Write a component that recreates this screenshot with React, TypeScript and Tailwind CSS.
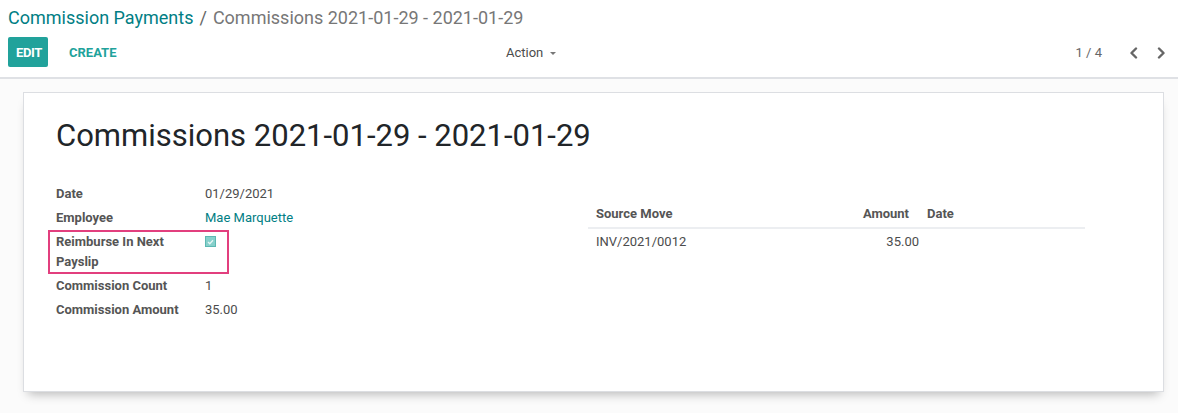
const fields = [
  { label: "Date", value: "01/29/2021" },
  { label: "Employee", value: "Mae Marquette", link: true },
]

const tail = [
  { label: "Commission Count", value: "1" },
  { label: "Commission Amount", value: "35.00" },
]

function Chevron({ dir }: { dir: "left" | "right" }) {
  return (
    <svg width="10" height="12" viewBox="0 0 10 12" className="text-[#666]">
      <path
        d={dir === "left" ? "M7 1.5 L2.5 6 L7 10.5" : "M3 1.5 L7.5 6 L3 10.5"}
        fill="none"
        stroke="currentColor"
        strokeWidth="2.4"
        strokeLinecap="round"
        strokeLinejoin="round"
      />
    </svg>
  )
}

function FieldRow({ label, value, link }: { label: string; value: string; link?: boolean }) {
  return (
    <div className="flex py-[2px] leading-[20px]">
      <div className="w-[149px] font-bold text-[#555]">{label}</div>
      <div className={link ? "text-[#017e84]" : "text-[#4c4c4c]"}>{value}</div>
    </div>
  )
}

export default function App() {
  return (
    <div className="min-h-[413px] bg-[#fbfbfb] font-['Roboto',sans-serif] text-[13px]">
      <div className="border-b-2 border-[#dfe1e5] bg-white px-2 pt-[3px] pb-[10px]">
        <div className="flex h-[28px] items-center text-[18px]">
          <span className="text-[#017e84]">Commission Payments</span>
          <span className="mx-[6px] text-[#666]">/</span>
          <span className="text-[#777]">Commissions 2021-01-29 - 2021-01-29</span>
        </div>
        <div className="mt-[6px] flex h-[30px] items-center">
          <div className="flex w-[497px] items-center">
            <button className="h-[30px] w-[40px] rounded-[2px] bg-[#21a29b] pl-[2px] pt-[2px] font-bold tracking-[-0.3px] text-white">EDIT</button>
            <span className="ml-[21px] pt-[2px] font-bold text-[#21a29b]">CREATE</span>
          </div>
          <div className="flex items-center pt-[2px] text-[#4c4c4c]">
            <span className="ml-[1px]">Action</span>
            <svg width="8" height="5" viewBox="0 0 8 5" className="ml-[6px]">
              <path d="M1 1 L4 4 L7 1 Z" fill="#777" />
            </svg>
          </div>
          <div className="ml-auto flex items-center gap-[17px] pr-[4px] pt-[2px] text-[#666]">
            <span className="mr-[10px]">1 / 4</span>
            <Chevron dir="left" />
            <Chevron dir="right" />
          </div>
        </div>
      </div>

      <div className="ml-[23px] mt-[13px] h-[300px] w-[1141px] border border-[#dcdee2] bg-white pl-[32px] pr-[24px] shadow-[0_7px_10px_-5px_rgba(0,0,0,0.28)]">
        <h1 className="mt-[24px] text-[31px] leading-[38px] text-[#212529]">Commissions 2021-01-29 - 2021-01-29</h1>
        <div className="mt-[27px] flex">
          <div className="w-[532px]">
            {fields.map((f) => (
              <FieldRow key={f.label} {...f} />
            ))}
            <div className="relative flex py-[2px] leading-[20px]">
              <div className="w-[149px] font-bold text-[#555]">
                Reimburse In Next
                <br />
                Payslip
              </div>
              <div className="pt-[4px]">
                <div className="flex h-[11px] w-[11px] items-center justify-center border border-[#5cb8b2] bg-[#86d0cb]">
                  <svg width="7" height="6" viewBox="0 0 7 6">
                    <path d="M1 3 L2.8 4.8 L6 1.2" fill="none" stroke="#e6f6f5" strokeWidth="1.3" />
                  </svg>
                </div>
              </div>
              <div className="pointer-events-none absolute left-[-8px] top-0 h-[44px] w-[181px] border-2 border-[#e23f7e]" />
            </div>
            {tail.map((f) => (
              <FieldRow key={f.label} {...f} />
            ))}
          </div>
          <div className="mt-[19px] w-[497px]">
            <div className="flex h-[28px] items-center border-b-2 border-[#eceef1] font-bold text-[#555]">
              <div className="w-[253px] pl-[8px]">Source Move</div>
              <div className="w-[68px] text-right">Amount</div>
              <div className="pl-[18px]">Date</div>
            </div>
            <div className="flex h-[26px] items-center text-[#4c4c4c]">
              <div className="w-[253px] pl-[8px]">INV/2021/0012</div>
              <div className="w-[78px] text-right">35.00</div>
            </div>
          </div>
        </div>
      </div>
    </div>
  )
}
